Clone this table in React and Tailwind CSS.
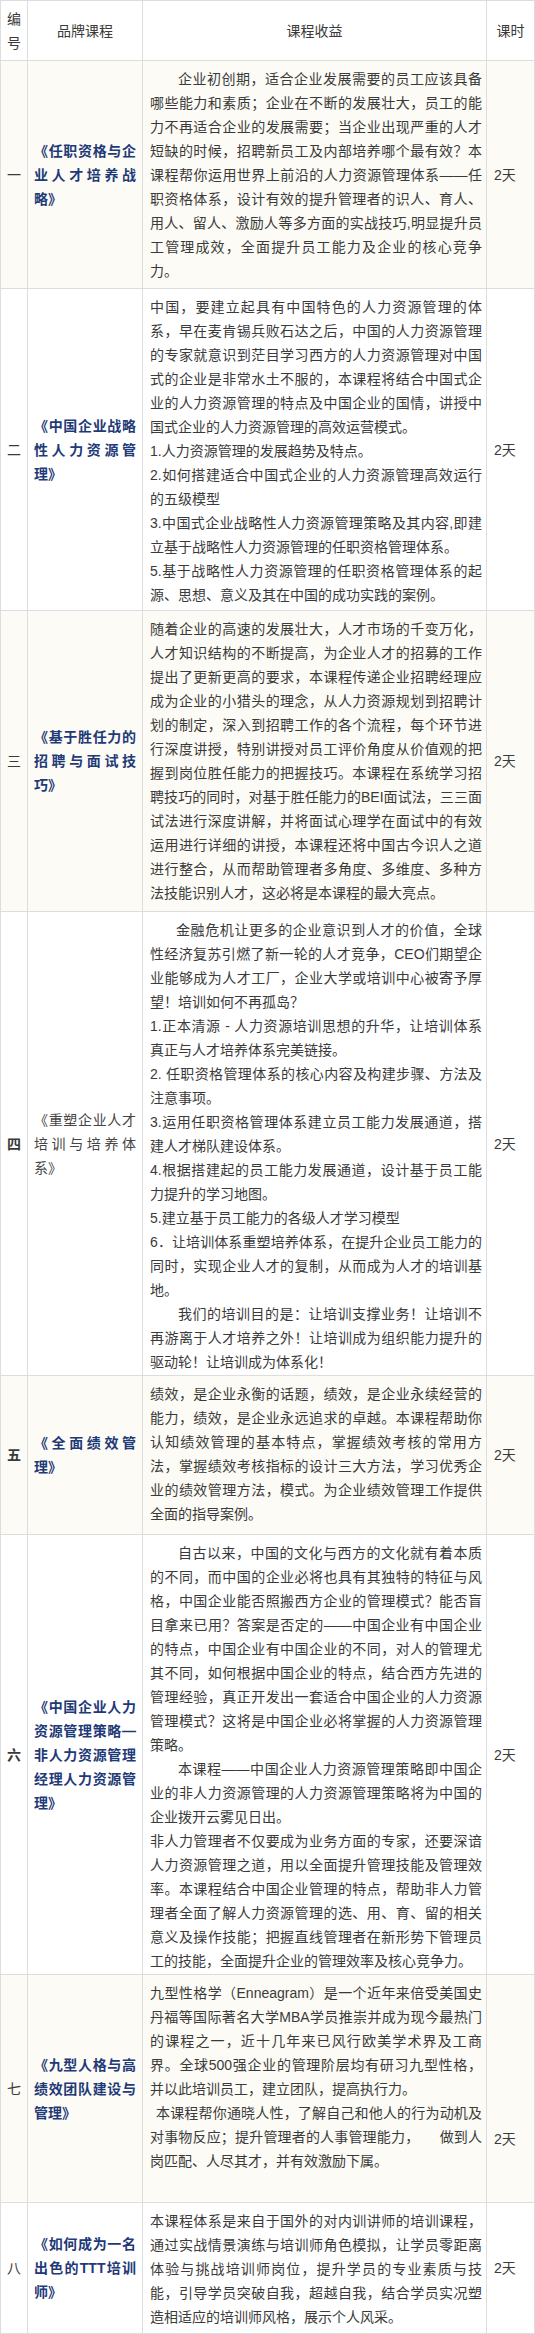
import React from "react";

// 品牌课程一览表
const courses = [
  {
    no: "一",
    name: "《任职资格与企业人才培养战略》",
    body: (
      <p className="indent-[28px]">
        企业初创期，适合企业发展需要的员工应该具备哪些能力和素质；企业在不断的发展壮大，员工的能力不再适合企业的发展需要；当企业出现严重的人才短缺的时候，招聘新员工及内部培养哪个最有效？本课程帮你运用世界上前沿的人力资源管理体系——任职资格体系，设计有效的提升管理者的识人、育人、用人、留人、激励人等多方面的实战技巧,明显提升员工管理成效，全面提升员工能力及企业的核心竞争力。
      </p>
    ),
  },
  {
    no: "二",
    name: "《中国企业战略性人力资源管理》",
    body: (
      <>
        <p>
          中国，要建立起具有中国特色的人力资源管理的体系，早在麦肯锡兵败石达之后，中国的人力资源管理的专家就意识到茫目学习西方的人力资源管理对中国式的企业是非常水土不服的，本课程将结合中国式企业的人力资源管理的特点及中国企业的国情，讲授中国式企业的人力资源管理的高效运营模式。
        </p>
        <p>1.人力资源管理的发展趋势及特点。</p>
        <p>2.如何搭建适合中国式企业的人力资源管理高效运行的五级模型</p>
        <p>
          3.中国式企业战略性人力资源管理策略及其内容,即建立基于战略性人力资源管理的任职资格管理体系。
        </p>
        <p>
          5.基于战略性人力资源管理的任职资格管理体系的起源、思想、意义及其在中国的成功实践的案例。
        </p>
      </>
    ),
  },
  {
    no: "三",
    name: "《基于胜任力的招聘与面试技巧》",
    body: (
      <p>
        随着企业的高速的发展壮大，人才市场的千变万化，人才知识结构的不断提高，为企业人才的招募的工作提出了更新更高的要求，本课程传递企业招聘经理应成为企业的小猎头的理念，从人力资源规划到招聘计划的制定，深入到招聘工作的各个流程，每个环节进行深度讲授，特别讲授对员工评价角度从价值观的把握到岗位胜任能力的把握技巧。本课程在系统学习招聘技巧的同时，对基于胜任能力的BEI面试法，三三面试法进行深度讲解，并将面试心理学在面试中的有效运用进行详细的讲授，本课程还将中国古今识人之道进行整合，从而帮助管理者多角度、多维度、多种方法技能识别人才，这必将是本课程的最大亮点。
      </p>
    ),
  },
  {
    no: "四",
    strongNo: true,
    plainName: true,
    name: "《重塑企业人才培训与培养体系》",
    body: (
      <>
        <p className="indent-[26px]">
          金融危机让更多的企业意识到人才的价值，全球性经济复苏引燃了新一轮的人才竞争，CEO们期望企业能够成为人才工厂，企业大学或培训中心被寄予厚望！培训如何不再孤岛？
        </p>
        <p>
          1.正本清源 - 人力资源培训思想的升华，让培训体系
          <span className="whitespace-nowrap">真正</span>与人才培养体系完美链接。
        </p>
        <p>2. 任职资格管理体系的核心内容及构建步骤、方法及注意事项。</p>
        <p>3.运用任职资格管理体系建立员工能力发展通道，搭建人才梯队建设体系。</p>
        <p>4.根据搭建起的员工能力发展通道，设计基于员工能力提升的学习地图。</p>
        <p>5.建立基于员工能力的各级人才学习模型</p>
        <p>
          6．让培训体系重塑培养体系，在提升企业员工能力的同时，实现企业人才的复制，从而成为人才的培训基地。
        </p>
        <p className="indent-[28px]">
          我们的培训目的是：让培训支撑业务！让培训不再游离于人才培养之外！让培训成为组织能力提升的驱动轮！让培训成为体系化！
        </p>
      </>
    ),
  },
  {
    no: "五",
    strongNo: true,
    name: "《全面绩效管理》",
    body: (
      <p>
        绩效，是企业永衡的话题，绩效，是企业永续经营的能力，绩效，是企业永远追求的卓越。本课程帮助你认知绩效管理的基本特点，掌握绩效考核的常用方法，掌握绩效考核指标的设计三大方法，学习优秀企业的绩效管理方法，模式。为企业绩效管理工作提供全面的指导案例。
      </p>
    ),
  },
  {
    no: "六",
    strongNo: true,
    name: "《中国企业人力资源管理策略—非人力资源管理经理人力资源管理》",
    body: (
      <>
        <p className="indent-[28px]">
          自古以来，中国的文化与西方的文化就有着本质的不同，而中国的企业必将也具有其独特的特征与风格，中国企业能否照搬西方企业的管理模式？能否盲目拿来已用？答案是否定的——中国企业有中国企业的特点，中国企业有中国企业的不同，对人的管理尤其不同，如何根据中国企业的特点，结合西方先进的管理经验，真正开发出一套适合中国企业的人力资源管理模式？这将是中国企业必将掌握的人力资源管理策略。
        </p>
        <p className="indent-[28px]">
          本课程——中国企业人力资源管理策略即中国企业的非人力资源管理的人力资源管理策略将为中国的企业拨开云雾见日出。
        </p>
        <p>
          非人力管理者不仅要成为业务方面的专家，还要深谙人力资源管理之道，用以全面提升管理技能及管理效率。本课程结合中国企业管理的特点，帮助非人力管理者全面了解人力资源管理的选、用、育、留的相关意义及操作技能；把握直线管理者在新形势下管理员工的技能，全面提升企业的管理效率及核心竞争力。
        </p>
      </>
    ),
  },
  {
    no: "七",
    lowHours: true,
    name: "《九型人格与高绩效团队建设与管理》",
    body: (
      <>
        <p>
          九型性格学（Enneagram）是一个近年来倍受美国史丹福等国际著名大学MBA学员推崇并成为现今最热门的课程之一，近十几年来已风行欧美学术界及工商界。全球500强企业的管理阶层均有研习九型性格，
          <span className="whitespace-nowrap">并以</span>此培训员工，建立团队，提高执行力。
        </p>
        <p className="indent-[6px]">
          本课程帮你通晓人性，了解自己和他人的行为动机及对事物反应；提升管理者的人事管理能力，
          {"\u00a0\u00a0\u00a0\u00a0\u00a0"}做到人岗匹配、人尽其才，并有效激励下属。
        </p>
      </>
    ),
  },
  {
    no: "八",
    name: "《如何成为一名出色的TTT培训师》",
    body: (
      <p>
        本课程体系是来自于国外的对内训讲师的培训课程，通过实战情景演练与培训师角色模拟，让学员零距离体验与挑战培训师岗位，提升学员的专业素质与技能，引导学员突破自我，超越自我，结合学员实况塑造相适应的培训师风格，展示个人风采。
      </p>
    ),
  },
];

function App() {
  return (
    <div className="w-[535px] bg-white font-['Liberation_Sans','Noto_Sans_CJK_SC',sans-serif] text-[14px] leading-[24px] text-[#3a3a3a] [text-spacing-trim:space-all] [text-autospace:no-autospace]">
      <div className="grid grid-cols-[26px_114px_343px_47px] grid-rows-[59px_227px_321px_300px_463px_158px_439px_227px_130px] gap-px border border-[#dddddd] bg-[#dddddd]">
        {/* header */}
        <div className="flex items-center justify-center bg-white px-[6px] text-center">
          编号
        </div>
        <div className="flex items-center justify-center bg-white">品牌课程</div>
        <div className="flex items-center justify-center bg-white">课程收益</div>
        <div className="flex items-center justify-center bg-white">课时</div>

        {courses.map((c, i) => {
          const bg = i % 2 === 0 ? "bg-[#fcfbf5]" : "bg-white";
          return (
            <React.Fragment key={c.no}>
              <div
                className={`flex items-center justify-center ${bg} ${
                  c.strongNo ? "font-bold" : ""
                }`}
              >
                {c.no}
              </div>
              <div className={`flex items-center ${bg} px-[6px]`}>
                <p
                  className={`w-full text-justify ${
                    c.plainName ? "text-[#454545]" : "font-bold text-[#1f3a78]"
                  }`}
                >
                  {c.name}
                </p>
              </div>
              <div className={`${bg} pt-[6px] pl-[7px] pr-[4px] text-justify`}>
                {c.body}
              </div>
              <div
                className={`flex ${
                  c.lowHours ? "items-end pb-[51px]" : "items-center"
                } ${bg} pl-[7px]`}
              >
                2天
              </div>
            </React.Fragment>
          );
        })}
      </div>
    </div>
  );
}

export default App;
